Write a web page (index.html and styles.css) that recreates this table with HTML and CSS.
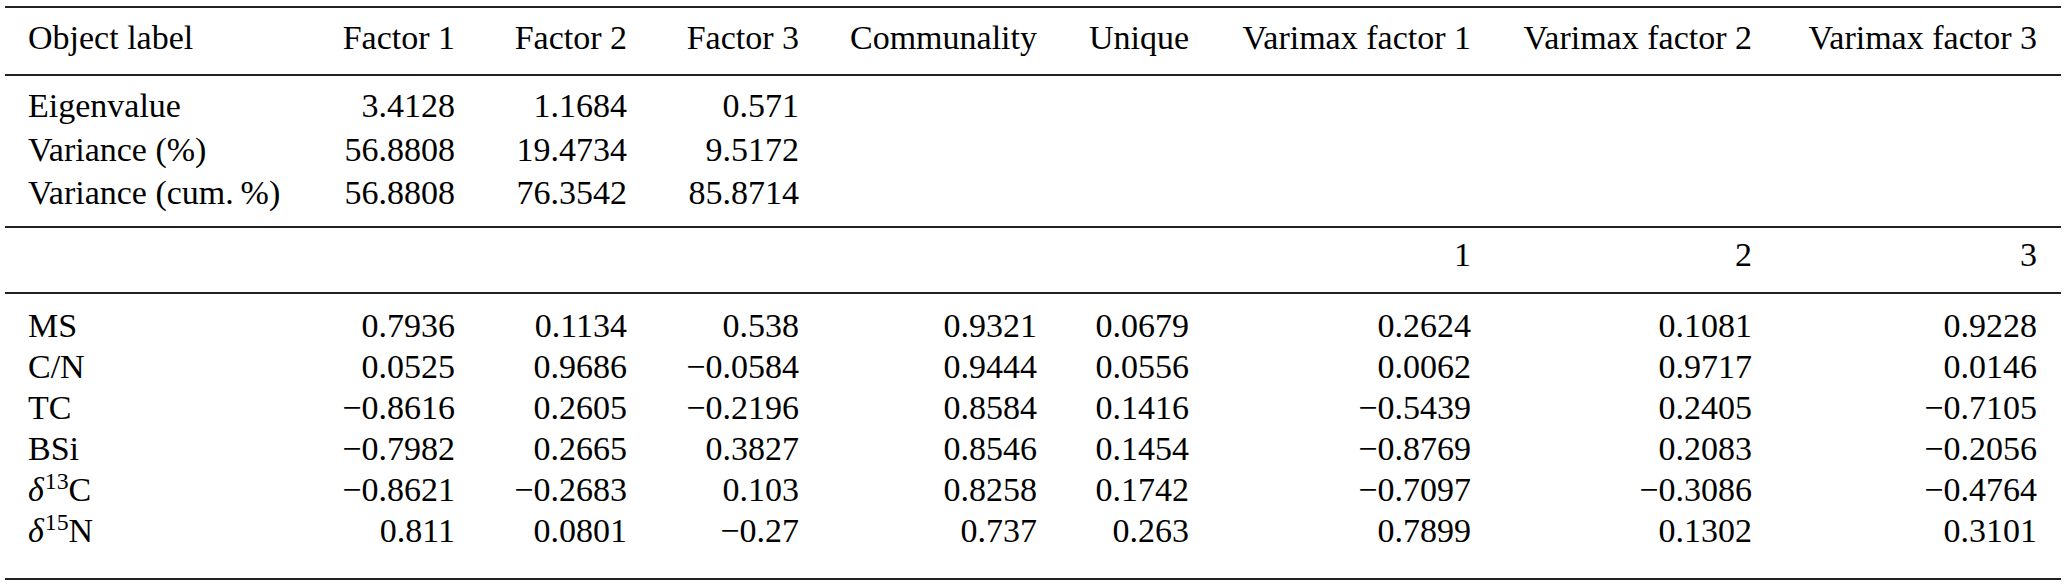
FILE: index.html
```html
<!DOCTYPE html>
<html lang="en">
<head>
<meta charset="utf-8">
<title>Factor analysis</title>
<link rel="stylesheet" href="styles.css">
</head>
<body>
<table class="tbl">
  <colgroup>
    <col class="c0"><col class="c1"><col class="c2"><col class="c3"><col class="c4"><col class="c5"><col class="c6"><col class="c7"><col class="c8">
  </colgroup>
  <thead>
    <tr class="head">
      <th class="lbl">Object label</th>
      <th>Factor 1</th>
      <th>Factor 2</th>
      <th>Factor 3</th>
      <th>Communality</th>
      <th>Unique</th>
      <th>Varimax factor 1</th>
      <th>Varimax factor 2</th>
      <th>Varimax factor 3</th>
    </tr>
  </thead>
  <tbody class="sec sec1">
    <tr class="first">
      <td class="lbl">Eigenvalue</td><td>3.4128</td><td>1.1684</td><td>0.571</td><td></td><td></td><td></td><td></td><td></td>
    </tr>
    <tr class="mid">
      <td class="lbl">Variance (%)</td><td>56.8808</td><td>19.4734</td><td>9.5172</td><td></td><td></td><td></td><td></td><td></td>
    </tr>
    <tr class="last">
      <td class="lbl">Variance (cum.&#8201;%)</td><td>56.8808</td><td>76.3542</td><td>85.8714</td><td></td><td></td><td></td><td></td><td></td>
    </tr>
  </tbody>
  <tbody class="sec sec2">
    <tr class="first last">
      <td class="lbl"></td><td></td><td></td><td></td><td></td><td></td><td>1</td><td>2</td><td>3</td>
    </tr>
  </tbody>
  <tbody class="sec sec3">
    <tr class="first">
      <td class="lbl">MS</td><td>0.7936</td><td>0.1134</td><td>0.538</td><td>0.9321</td><td>0.0679</td><td>0.2624</td><td>0.1081</td><td>0.9228</td>
    </tr>
    <tr>
      <td class="lbl">C/N</td><td>0.0525</td><td>0.9686</td><td>&minus;0.0584</td><td>0.9444</td><td>0.0556</td><td>0.0062</td><td>0.9717</td><td>0.0146</td>
    </tr>
    <tr>
      <td class="lbl">TC</td><td>&minus;0.8616</td><td>0.2605</td><td>&minus;0.2196</td><td>0.8584</td><td>0.1416</td><td>&minus;0.5439</td><td>0.2405</td><td>&minus;0.7105</td>
    </tr>
    <tr>
      <td class="lbl">BSi</td><td>&minus;0.7982</td><td>0.2665</td><td>0.3827</td><td>0.8546</td><td>0.1454</td><td>&minus;0.8769</td><td>0.2083</td><td>&minus;0.2056</td>
    </tr>
    <tr>
      <td class="lbl"><i class="delta">δ</i><sup class="iso">13</sup>C</td><td>&minus;0.8621</td><td>&minus;0.2683</td><td>0.103</td><td>0.8258</td><td>0.1742</td><td>&minus;0.7097</td><td>&minus;0.3086</td><td>&minus;0.4764</td>
    </tr>
    <tr class="last">
      <td class="lbl"><i class="delta">δ</i><sup class="iso">15</sup>N</td><td>0.811</td><td>0.0801</td><td>&minus;0.27</td><td>0.737</td><td>0.263</td><td>0.7899</td><td>0.1302</td><td>0.3101</td>
    </tr>
  </tbody>
</table>
</body>
</html>
```

FILE: styles.css
```css
html, body {
  margin: 0;
  padding: 0;
  background: #ffffff;
}

body {
  padding: 6px 0 0 5px;
}

.tbl {
  border-collapse: separate;
  border-spacing: 0;
  table-layout: fixed;
  width: 2056px;
  font-family: "Liberation Serif", "Times New Roman", serif;
  font-size: 34px;
  color: #000;
}

.c0 { width: 301px; }
.c1 { width: 173px; }
.c2 { width: 172px; }
.c3 { width: 172px; }
.c4 { width: 238px; }
.c5 { width: 152px; }
.c6 { width: 282px; }
.c7 { width: 281px; }
.c8 { width: 285px; }

.tbl th,
.tbl td {
  font-weight: normal;
  line-height: 41px;
  height: 41px;
  padding: 0 24px 0 0;
  text-align: right;
  white-space: nowrap;
  vertical-align: top;
}

.tbl .lbl {
  text-align: left;
  padding-left: 23px;
  padding-right: 0;
}

.tbl .head th {
  border-top: 2px solid #222;
  border-bottom: 2px solid #222;
  padding-top: 9px;
  padding-bottom: 16px;
}

.tbl .sec .last td {
  border-bottom: 2px solid #222;
}

/* section 1: eigenvalues / variance */
.tbl .sec1 td {
  line-height: 44px;
  height: 44px;
}
.tbl .sec1 .mid td {
  line-height: 43px;
  height: 43px;
}
.tbl .sec1 .first td {
  padding-top: 8px;
}
.tbl .sec1 .last td {
  padding-bottom: 11px;
}

/* section 2: varimax index row */
.tbl .sec2 .first td {
  padding-top: 6px;
  padding-bottom: 17px;
}

/* section 3: loadings */
.tbl .sec3 .first td {
  padding-top: 11px;
}
.tbl .sec3 .last td {
  padding-bottom: 27px;
}

.delta {
  font-style: italic;
}

.iso {
  font-size: 0.7em;
  line-height: 0;
  vertical-align: 0.5em;
  margin-left: 1px;
}
```
